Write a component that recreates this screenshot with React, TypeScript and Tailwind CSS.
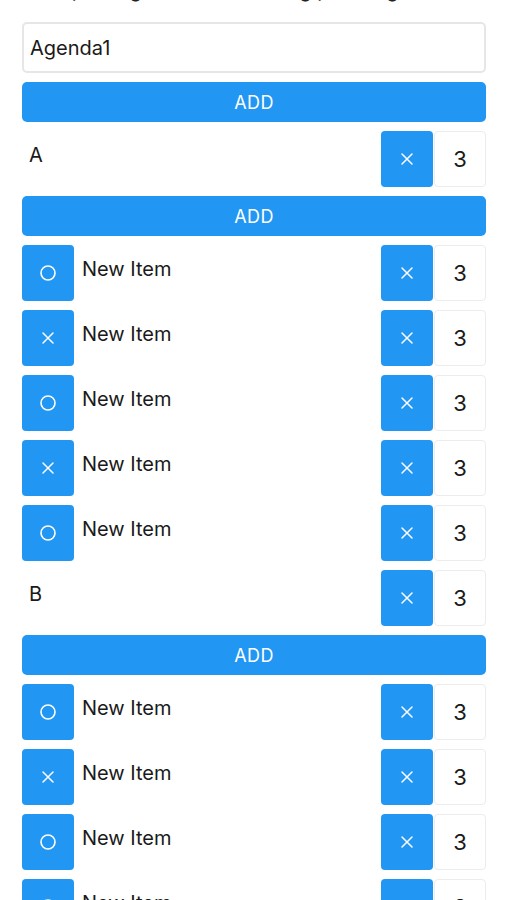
import { useState } from 'react'

type Item = { id: number; name: string; done: boolean; count: number }
type Agenda = { id: number; title: string; count: number; items: Item[] }

const initial: Agenda[] = [
    {
        id: 1, title: 'A', count: 3,
        items: [false, true, false, true, false].map((d, i) => ({ id: i, name: 'New Item', done: d, count: 3 })),
    },
    {
        id: 2, title: 'B', count: 3,
        items: [false, true, false, false].map((d, i) => ({ id: i, name: 'New Item', done: d, count: 3 })),
    },
]

function Circle() {
    return (
        <svg width="18" height="18" viewBox="0 0 18 18" fill="none">
            <circle cx="9" cy="9" r="7" stroke="white" strokeWidth="1.6" />
        </svg>
    )
}

function Cross() {
    return (
        <svg width="16" height="16" viewBox="0 0 16 16" fill="none">
            <path d="M3 3L13 13M13 3L3 13" stroke="white" strokeWidth="1.5" strokeLinecap="round" />
        </svg>
    )
}

function Count({ value }: { value: number }) {
    return (
        <div className="w-[52px] h-[56px] ml-[1px] flex items-center justify-center rounded border border-[#ececec] bg-white text-[22px] text-[#1a1a1a]">
            {value}
        </div>
    )
}

function AddButton({ onClick }: { onClick?: () => void }) {
    return (
        <button
            type="button"
            onClick={onClick}
            className="w-full h-[40px] rounded-[5px] bg-[#2196f3] text-white text-[18px] tracking-wide"
        >
            ADD
        </button>
    )
}

export default function App() {
    const [name, setName] = useState('Agenda1')
    const [agendas, setAgendas] = useState(initial)

    const toggle = (aid: number, iid: number): void => {
        setAgendas(agendas.map(a => a.id !== aid ? a : {
            ...a, items: a.items.map(it => it.id === iid ? { ...it, done: !it.done } : it),
        }))
    }

    return (
        <div className="min-h-screen bg-white pl-[22px] pr-[21px] overflow-hidden flow-root" style={{ fontFamily: 'Inter, "Noto Sans", sans-serif' }}>
            <div className="-mt-[21px] h-[22px] text-center text-[20px] text-[#222] leading-[22px] whitespace-nowrap">
                Tap an agenda to <span className="text-[#2196f3]">edit</span> · long press agenda <span className="text-[#2196f3]">›</span>
            </div>
            <div className="flex flex-col gap-[9px] mt-[21px]">
                <input
                    value={name}
                    onChange={e => setName(e.target.value)}
                    className="h-[51px] w-full rounded-[5px] border-2 border-[#e6e6e6] px-[6px] text-[20px] text-[#1a1a1a] outline-none"
                />
                <AddButton />
                {agendas.map(a => (
                    <div key={a.id} className="flex flex-col gap-[9px]">
                        <div className="flex h-[56px]">
                            <div className="flex-1 pl-[7px] pt-[12px] text-[20px] leading-[24px] text-[#1a1a1a]">{a.title}</div>
                            <button type="button" className="w-[52px] h-[56px] rounded bg-[#2196f3] flex items-center justify-center">
                                <Cross />
                            </button>
                            <Count value={a.count} />
                        </div>
                        <AddButton />
                        {a.items.map(it => (
                            <div key={it.id} className="flex h-[56px]">
                                <button
                                    type="button"
                                    onClick={() => toggle(a.id, it.id)}
                                    className="w-[52px] h-[56px] rounded bg-[#2196f3] flex items-center justify-center"
                                >
                                    {it.done ? <Cross /> : <Circle />}
                                </button>
                                <div className="flex-1 pl-[8px] pt-[12px] text-[20px] leading-[24px] text-[#1a1a1a]">{it.name}</div>
                                <button type="button" className="w-[52px] h-[56px] rounded bg-[#2196f3] flex items-center justify-center">
                                    <Cross />
                                </button>
                                <Count value={it.count} />
                            </div>
                        ))}
                    </div>
                ))}
            </div>
        </div>
    )
}
